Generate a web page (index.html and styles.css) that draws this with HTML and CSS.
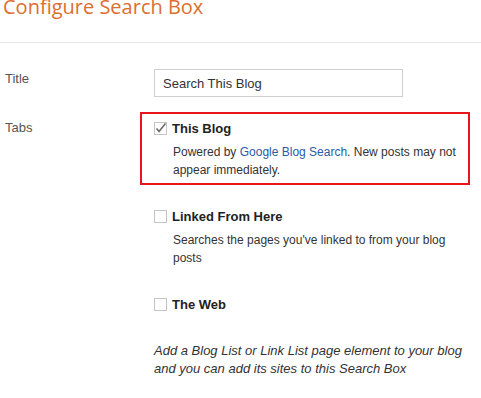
FILE: index.html
```html
<!DOCTYPE html>
<html>
<head>
<meta charset="utf-8">
<link rel="stylesheet" href="styles.css">
</head>
<body>
<h1 class="heading">Configure Search Box</h1>
<div class="form">
  <div class="label label-title">Title</div>
  <div class="field"><input class="text-input" type="text" value="Search This Blog"></div>
  <div class="label label-tabs">Tabs</div>
  <div class="field">
    <div class="tabs">
      <div class="tab tab-active">
        <div class="tab-head">
          <svg class="check" width="13" height="13" viewBox="0 0 13 13"><rect x="0.5" y="0.5" width="12" height="12" fill="#fff" stroke="#c4c4c4"/><path d="M2.5 6.5 L5 9.5 L11.5 1.5" fill="none" stroke="#6a6a6a" stroke-width="1.6"/></svg>
          <span class="tab-name">This Blog</span>
        </div>
        <div class="tab-desc">Powered by <a class="link" href="#">Google Blog Search</a>. New posts may not appear immediately.</div>
      </div>
      <div class="tab">
        <div class="tab-head">
          <svg class="check" width="13" height="13" viewBox="0 0 13 13"><rect x="0.5" y="0.5" width="12" height="12" fill="#fff" stroke="#c4c4c4"/></svg>
          <span class="tab-name">Linked From Here</span>
        </div>
        <div class="tab-desc">Searches the pages you've linked to from your blog posts</div>
      </div>
      <div class="tab">
        <div class="tab-head">
          <svg class="check" width="13" height="13" viewBox="0 0 13 13"><rect x="0.5" y="0.5" width="12" height="12" fill="#fff" stroke="#c4c4c4"/></svg>
          <span class="tab-name">The Web</span>
        </div>
      </div>
    </div>
    <p class="note">Add a Blog List or Link List page element to your blog and you can add its sites to this Search Box</p>
  </div>
</div>
</body>
</html>
```
FILE: styles.css
```css
html, body {
  margin: 0;
  padding: 0;
  background: #fff;
}
body {
  font-family: Arial, "Liberation Sans", sans-serif;
  color: #333;
  overflow: hidden;
}
.heading {
  margin: -7px 0 0;
  padding: 0 0 21px 3px;
  font-family: "Open Sans", sans-serif;
  font-weight: 400;
  font-size: 20px;
  line-height: 28px;
  color: #dd6e2e;
  border-bottom: 1px solid #e5e5e5;
}
.form {
  display: grid;
  grid-template-columns: 149px 1fr;
  row-gap: 15px;
  padding: 26px 0 0 5px;
}
.label {
  font-size: 13px;
  line-height: 18px;
  color: #555;
}
.label-title { padding-top: 1px; }
.label-tabs { padding-top: 7px; }
.text-input {
  box-sizing: border-box;
  width: 249px;
  height: 28px;
  margin: 0;
  padding: 0 8px;
  border: 1px solid #cfcfcf;
  font-family: Arial, "Liberation Sans", sans-serif;
  font-size: 13px;
  color: #333;
  outline: none;
}
.tabs {
  display: flex;
  flex-direction: column;
  gap: 15px;
  width: 330px;
  margin-left: -14px;
}
.tab {
  border: 2px solid transparent;
  padding: 5px 2px 4px 12px;
}
.tab-active {
  border-color: #e8161c;
}
.tab-head {
  display: flex;
  align-items: center;
  gap: 5px;
  height: 18px;
}
.check {
  display: block;
  flex: none;
}
.tab-name {
  font-weight: bold;
  font-size: 13px;
  color: #222;
}
.tab-desc {
  margin-top: 6px;
  padding-left: 19px;
  font-size: 12px;
  line-height: 18px;
  color: #333;
}
.link {
  color: #2b5aa8;
  text-decoration: none;
}
.note {
  width: 316px;
  margin: 23px 0 0;
  font-size: 13px;
  line-height: 18px;
  font-style: italic;
  color: #333;
}
```
